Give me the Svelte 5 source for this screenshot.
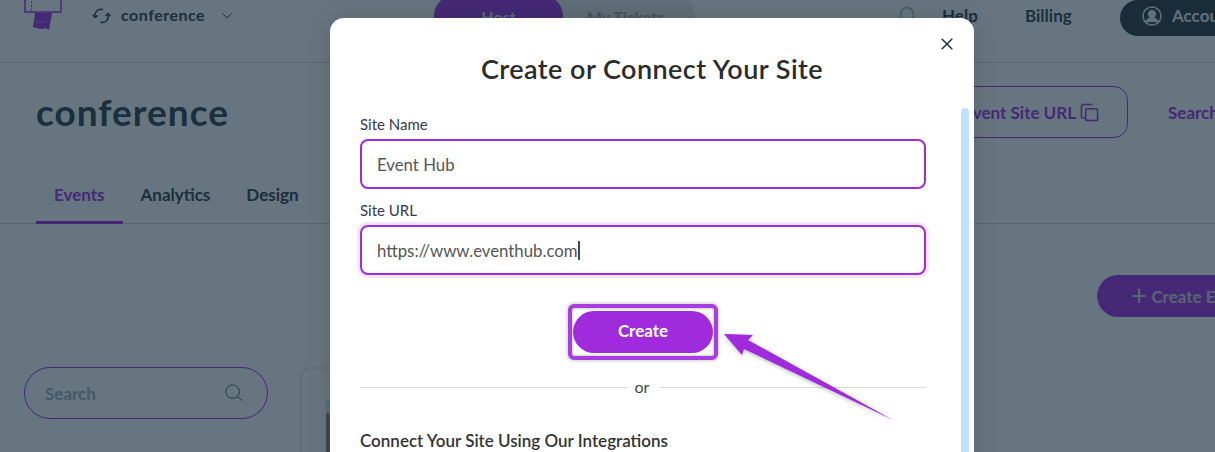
<script>
  const tabs = ['Events', 'Analytics', 'Design'];
</script>

<div class="page">
  <header class="topbar">
    <div class="brand">
      <svg class="logo" viewBox="0 0 38 30" width="38" height="30" aria-hidden="true">
        <path d="M1 -4V12H37V-4" fill="none" stroke="#ac43e8" stroke-width="1.5"/>
        <path d="M7.500 -2V12" stroke="#ac43e8" stroke-dasharray="2 1.500" stroke-width="1"/>
        <path d="M11 13H28L25 30C23 29 22 28 21 28C19 29 18 29 17 29C14 28 11 28 9 27Z" fill="#ac43e8"/>
        <path d="M12 22H23" stroke="#d9b6f2" stroke-width="1" stroke-dasharray="2 1.500"/>
      </svg>
      <svg class="sync" viewBox="0 0 20 18" width="20" height="18" fill="none" stroke="#46525c" stroke-width="1.500" aria-hidden="true">
        <path d="M3 10C2 5 6 1.500 11 2.500"/>
        <path d="M0.800 7.800L3 10.500L5.800 8.300"/>
        <path d="M16 7C17.500 12 13.500 17 8.500 15"/>
        <path d="M13.500 9L16 6.500L18.800 8.800"/>
      </svg>
      <span class="site">conference</span>
      <svg class="chev" viewBox="0 0 10 6" width="10" height="6" fill="none" stroke="#46525c" stroke-width="1"><path d="M.5.500 5 5 9.500.500"/></svg>
    </div>
    <div class="toggle">
      <span class="on">Host</span>
      <span class="off">My Tickets</span>
    </div>
    <div class="right">
      <svg class="bell" viewBox="0 0 14 20" width="14" height="20" fill="none" stroke="#a0aab3" stroke-width="1.200"><path d="M.7 20V7a6.300 6.300 0 0 1 12.600 0V20"/></svg>
      <span class="help">Help</span>
      <span class="billing">Billing</span>
      <div class="account">
        <svg viewBox="0 0 20 20" width="20" height="20" fill="none" stroke="#f3f3f3" stroke-width="1.500"><circle cx="10" cy="10" r="9"/><circle cx="10" cy="8" r="3.300" fill="#f3f3f3"/><path d="M4 16c1.500-3 3.500-4 6-4s4.500 1 6 4" fill="#f3f3f3"/></svg>
        <span>Account</span>
      </div>
    </div>
  </header>

  <section class="titlebar">
    <h2>conference</h2>
    <div class="actions">
      <button class="url">Copy Event Site URL
        <svg viewBox="0 0 20 20" width="19" height="19" fill="none" stroke="#ac43e8" stroke-width="1.600"><path d="M6 16H3.500A2 2 0 0 1 1.500 14V3.500A2 2 0 0 1 3.500 1.500H13"/><rect x="6" y="6" width="12.500" height="12.500" rx="2"/></svg>
      </button>
      <span class="searchlink">Search</span>
    </div>
  </section>

  <nav class="tabs">
    {#each tabs as tab, i}
      <span class="tab" class:active={i === 0}>{tab}</span>
    {/each}
  </nav>

  <div class="createrow">
    <button class="createevent"><span class="plus">+</span> Create Event</button>
  </div>

  <div class="lower">
    <div class="search">
      <span>Search</span>
      <svg viewBox="0 0 20 20" width="18" height="18" fill="none" stroke="#46525c" stroke-width="1"><circle cx="8.500" cy="8.500" r="7.500"/><path d="M14 14l5 4.500"/></svg>
    </div>
    <div class="card"><div class="thumb"></div></div>
  </div>

  <div class="overlay"></div>

  <div class="modal">
    <button class="close" aria-label="Close">
      <svg viewBox="0 0 12 12" width="12" height="12" fill="none" stroke="#1f3442" stroke-width="1.500"><path d="M.7.700l10.600 10.600M11.300.700.700 11.300"/></svg>
    </button>
    <h1>Create or Connect Your Site</h1>
    <label class="field first">
      <span>Site Name</span>
      <div class="input">Event Hub</div>
    </label>
    <label class="field">
      <span>Site URL</span>
      <div class="input focus">https://www.eventhub.com<i class="caret"></i></div>
    </label>
    <div class="btnrow">
      <div class="mark"><button class="create">Create</button></div>
    </div>
    <div class="or"><b></b><span>or</span><b></b></div>
    <h3>Connect Your Site Using Our Integrations</h3>
    <div class="scroll"></div>
  </div>

  <svg class="arrow" viewBox="0 0 180 100" width="180" height="100" aria-hidden="true">
    <path d="M3 3L32 4L27 9L172 89L23 18L21 24Z" fill="#a02bdc"/>
  </svg>
</div>

<style>
  :global(body) { margin: 0; overflow: hidden; background: #fff; }
  .page {
    position: relative;
    width: 1215px;
    height: 452px;
    overflow: hidden;
    font-family: "Lato", "Open Sans", sans-serif;
    color: #46525c;
    background: #fff;
  }
  .topbar {
    height: 62px;
    border-bottom: 1px solid #dcdcdc;
    position: relative;
    display: flex;
    justify-content: space-between;
  }
  .brand { display: flex; align-items: flex-start; padding-left: 24px; }
  .logo { display: block; }
  .sync { margin: 7px 0 0 30px; }
  .site { margin: 5px 0 0 9px; font-size: 16px; font-weight: 700; letter-spacing: .5px; line-height: 20px; color: #46525c; }
  .chev { margin: 13px 0 0 17px; }
  .toggle {
    position: absolute; left: 433px; top: -5px;
    width: 262px; height: 42px; border-radius: 21px; background: #eee;
    display: flex; font-weight: 700; font-size: 16px; padding-left: 1px; box-sizing: border-box;
  }
  .toggle span { display: flex; align-items: center; justify-content: center; box-sizing: border-box; }
  .toggle .on { width: 129px; background: #ac43e8; border-radius: 21px; color: #e6e6e6; }
  .toggle .off { flex: 1; color: #aaa; padding-right: 7px; }
  .right { display: flex; align-items: flex-start; font-weight: 700; font-size: 17px; }
  .bell { margin-top: 7px; margin-right: 28px; }
  .help { margin-top: 5px; width: 83px; line-height: 22px; }
  .billing { margin-top: 5px; width: 95px; line-height: 22px; }
  .account {
    width: 95px; height: 36px; background: #3e4951; border-radius: 18px 0 0 18px;
    display: flex; align-items: center; gap: 10px; padding: 0 0 5px 22px; box-sizing: border-box;
    white-space: nowrap; overflow: hidden; color: #f3f3f3;
  }
  .account svg { flex: none; }
  .titlebar { height: 105px; display: flex; justify-content: space-between; }
  .titlebar h2 { margin: 26px 0 0 36px; font-size: 37px; font-weight: 700; line-height: 46px; letter-spacing: 1px; color: #46525c; }
  .actions { display: flex; align-items: flex-start; }
  .url {
    margin-top: 23px; height: 52px; border: 1px solid #ac43e8; border-radius: 14px; background: none;
    font: 700 17px "Lato", sans-serif; color: #ac43e8; padding: 0 28px 0 20px; display: flex; align-items: center; gap: 4px; margin-right: 40px;
  }
  .searchlink { margin-top: 39px; width: 47px; font-weight: 700; font-size: 17px; line-height: 22px; color: #ac43e8; overflow: hidden; }
  .tabs { height: 56px; display: flex; border-bottom: 1px solid #dcdcdc; padding-left: 36px; box-sizing: border-box; }
  .tab { padding: 16px 18px 0; font-size: 17px; line-height: 22px; font-weight: 700; color: #46525c; }
  .tab.active { color: #ac43e8; border-bottom: 3px solid #ac43e8; height: 56px; box-sizing: border-box; }
  .createrow { display: flex; justify-content: flex-end; padding-top: 51px; }
  .createevent {
    width: 118px; height: 42px; border: none; border-radius: 21px 0 0 21px; background: #ac43e8; color: #d9d9d9;
    font: 700 17px "Lato", sans-serif; white-space: nowrap; overflow: hidden; text-align: left; padding: 0 0 0 34px;
  }
  .plus { font-size: 28px; font-weight: 400; vertical-align: -3px; line-height: 20px; }
  .lower { display: flex; padding: 50px 0 0 24px; gap: 32px; }
  .search {
    width: 244px; height: 52px; box-sizing: border-box; border: 1px solid #ac43e8; border-radius: 26px;
    display: flex; align-items: center; justify-content: space-between; padding: 0 24px 0 20px;
    font-weight: 700; font-size: 17px; color: #acb9ca;
  }
  .card { width: 100px; height: 100px; border: 2px solid #eee; border-radius: 10px; padding: 31px 0 0 24px; box-sizing: border-box; }
  .thumb { width: 8px; height: 60px; background: linear-gradient(#d0f0ff 0 13px, #a0937f 13px); }
  .overlay { position: absolute; inset: 0; background: rgba(0, 25, 42, .6); }
  .modal {
    position: absolute; left: 330px; top: 18px; width: 644px; height: 470px;
    background: #fff; border-radius: 14px; padding: 0 48px 0 30px; box-sizing: border-box;
    box-shadow: 0 0 24px rgba(0,0,0,.12);
  }
  .modal h1 { margin: 33px -18px 0 0; text-align: center; font-size: 27px; font-weight: 600; line-height: 36px; letter-spacing: .45px; color: #2b2b2b; }
  .close { position: absolute; right: 21px; top: 20px; border: none; background: none; padding: 0; display: flex; }
  .field { display: block; width: 566px; }
  .field.first { margin-top: 27px; }
  .field span { display: block; font-size: 15px; line-height: 20px; margin-bottom: 5px; color: #33384f; }
  .field + .field { margin-top: 11px; }
  .input {
    height: 50px; box-sizing: border-box; border: 2px solid #a02bdc; border-radius: 8px;
    display: flex; align-items: center; padding-left: 15px; font-size: 16.800px; color: #555;
  }
  .input.focus { box-shadow: 0 0 0 3px #f3e6fb; }
  .caret { width: 2px; height: 19px; background: #3e4955; display: inline-block; }
  .btnrow { width: 566px; display: flex; justify-content: center; margin-top: 29px; }
  .mark { border: 4px solid #a83edf; border-radius: 6px; padding: 3px 1px; background: #fff; box-shadow: 0 0 4px rgba(0,0,0,.3), inset 0 0 3px rgba(0,0,0,.4); }
  .create {
    display: block; width: 140px; height: 42px; border: none; border-radius: 21px; background: #a02bdc; color: #fff;
    font: 700 17px "Lato", sans-serif; padding: 0 0 3px;
  }
  .or { width: 566px; display: flex; align-items: center; gap: 10px; margin-top: 17px; color: #444; font-size: 16px; line-height: 20px; }
  .or b { flex: 1; height: 1px; background: #dcdcdc; }
  .or span { width: 12px; display: flex; justify-content: center; position: relative; left: -1px; }
  h3 { margin: 34px 0 0; font-size: 17px; font-weight: 600; line-height: 20px; color: #333; }
  .scroll { position: absolute; left: 631px; top: 90px; width: 8px; height: 380px; border-radius: 4px; background: #bfe1fb; }
  .arrow { position: absolute; left: 721px; top: 331px; filter: drop-shadow(0 1px 2px rgba(0,0,0,.3)); }
</style>
